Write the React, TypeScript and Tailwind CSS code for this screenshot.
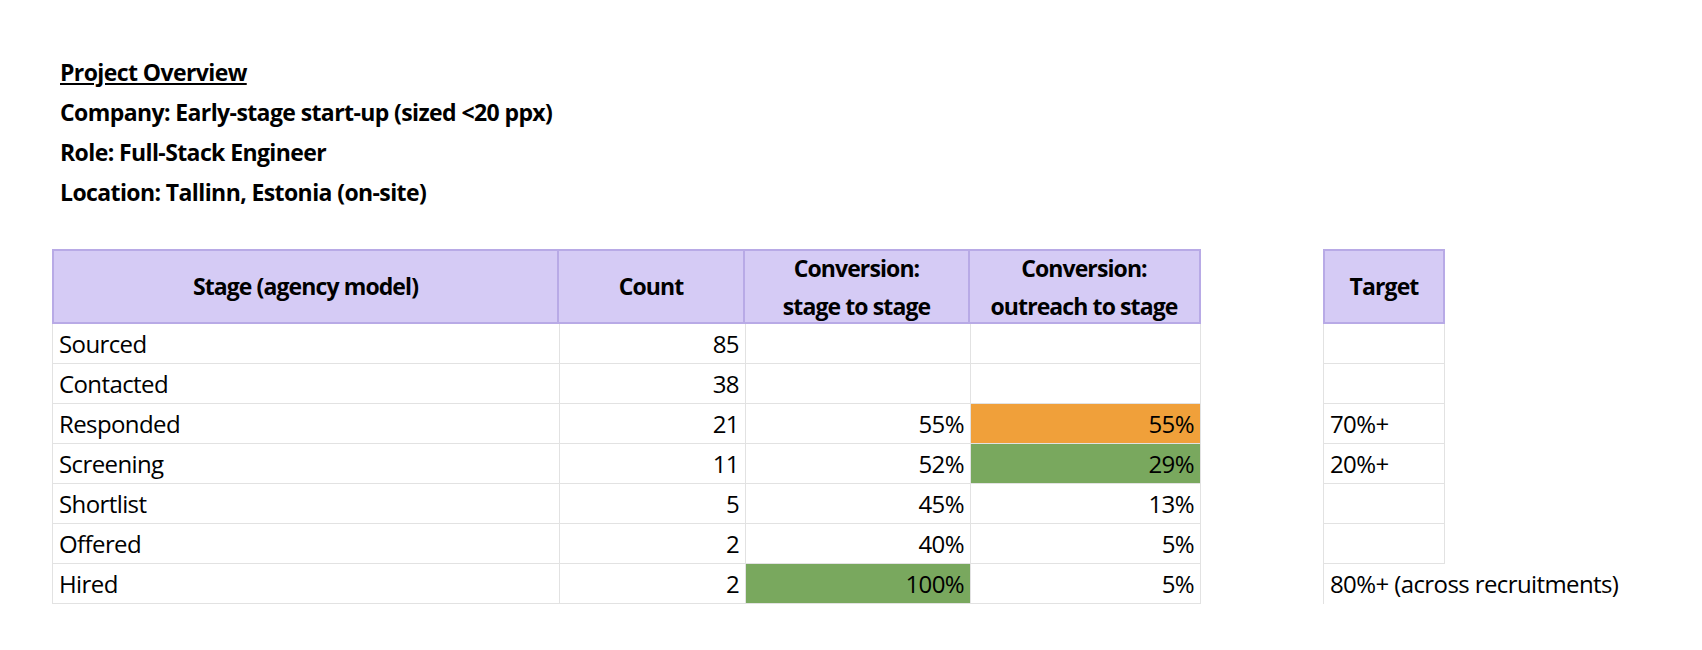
import React from "react";

const rows = [
  ["Sourced", "85", "", "", "", ""],
  ["Contacted", "38", "", "", "", ""],
  ["Responded", "21", "55%", "55%o", "70%+"],
  ["Screening", "11", "52%", "29%g", "20%+"],
  ["Shortlist", "5", "45%", "13%", ""],
  ["Offered", "2", "40%", "5%", ""],
  ["Hired", "2", "100%g", "5%", "80%+ (across recruitments)"],
];

function Cell({ v, w }: { v: string; w: string }) {
  let bg = "";
  let t = v;
  if (v.endsWith("o")) { bg = "bg-[#f0a03a]"; t = v.slice(0, -1); }
  if (v.endsWith("g")) { bg = "bg-[#79a85e]"; t = v.slice(0, -1); }
  return (
    <div className={`${w} ${bg} h-full flex items-center justify-end px-[6px] border-r border-b border-[#e2e2e2]`}>{t}</div>
  );
}

export default function App() {
  return (
    <div className="w-[1702px] h-[650px] bg-white text-black leading-none" style={{ fontFamily: '"Open Sans", "Liberation Sans", sans-serif' }}>
      <div className="pt-[52px] pl-[60px] font-bold text-[23px] leading-[40px] flex flex-col tracking-[-0.6px]">
        <div className="underline">Project Overview</div>
        <div>Company: Early-stage start-up (sized &lt;20 ppx)</div>
        <div>Role: Full-Stack Engineer</div>
        <div>Location: Tallinn, Estonia (on-site)</div>
      </div>
      <div className="flex mt-[37px] ml-[52px] text-[24px] tracking-[-0.6px]">
        <div className="flex flex-col">
          <div className="flex h-[75px] bg-[#d5cbf5] font-bold border-2 border-[#b8aae6] text-[23px] tracking-[-0.9px]">
            <div className="w-[505px] flex items-center justify-center border-r-2 border-[#b8aae6]">Stage (agency model)</div>
            <div className="w-[186px] flex items-center justify-center border-r-2 border-[#b8aae6]">Count</div>
            <div className="w-[225px] flex flex-col items-center justify-center border-r-2 border-[#b8aae6] leading-[38px] whitespace-nowrap"><span>Conversion:</span><span>stage to stage</span></div>
            <div className="w-[228px] flex flex-col items-center justify-center leading-[38px] whitespace-nowrap"><span>Conversion:</span><span>outreach to stage</span></div>
          </div>
          {rows.map((r) => (
            <div key={r[0]} className="flex h-[40px] border-l border-[#e2e2e2]">
              <div className="w-[507px] h-full flex items-center px-[6px] border-r border-b border-[#e2e2e2]">{r[0]}</div>
              <Cell v={r[1]} w="w-[186px]" />
              <Cell v={r[2]} w="w-[225px]" />
              <Cell v={r[3]} w="w-[230px]" />
            </div>
          ))}
        </div>
        <div className="flex flex-col ml-[122px]">
          <div className="w-[122px] h-[75px] bg-[#d5cbf5] font-bold border-2 border-[#b8aae6] flex items-center justify-center text-[23px] tracking-[-0.9px]">Target</div>
          {rows.map((r, i) => (
            <div key={r[0]} className={`h-[40px] flex items-center px-[6px] whitespace-nowrap ${i < 6 ? "w-[122px] border-x border-b border-[#e2e2e2]" : "border-l border-[#e2e2e2]"}`}>{r[4] ?? ""}</div>
          ))}
        </div>
      </div>
    </div>
  );
}
